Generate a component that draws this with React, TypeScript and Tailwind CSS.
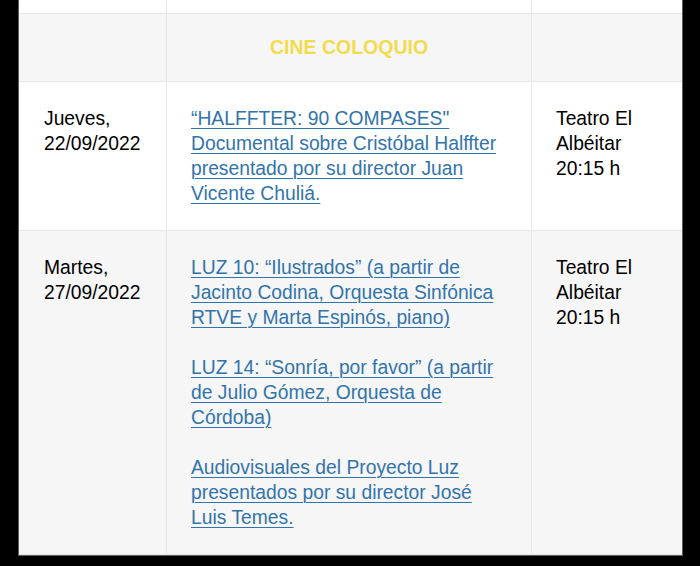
import React from 'react';

const linkCls = 'text-[#3274aa] underline decoration-1 underline-offset-[3px]';

const Cell: React.FC<{ last?: boolean; className?: string; children?: React.ReactNode }> = ({
  last,
  className = '',
  children,
}) => (
  <div className={`border-b border-[#e7e7e7] ${last ? '' : 'border-r'} ${className}`}>{children}</div>
);

export default function App() {
  return (
    <div className="w-[700px] h-[566px] bg-black overflow-hidden" style={{ fontFamily: '"Liberation Sans", Arial, sans-serif' }}>
      <div className="ml-[18px] w-[665px] border-l border-r border-b border-[#5e5e5e] bg-white text-[19.3px] leading-[25px] text-black">
        <div className="grid grid-cols-[148px_365px_150px]">
          {/* tail of the previous row */}
          <Cell className="h-[14px]" />
          <Cell className="h-[14px]" />
          <Cell last className="h-[14px]" />

          {/* section heading */}
          <Cell className="bg-[#f6f6f6]" />
          <Cell className="bg-[#f6f6f6] py-6 text-center text-[19.5px] leading-[19px] font-bold text-[#f1dc4e]">
            CINE COLOQUIO
          </Cell>
          <Cell last className="bg-[#f6f6f6]" />

          <Cell className="px-[25px] py-6">
            Jueves,
            <br />
            22/09/2022
          </Cell>
          <Cell className="px-6 py-6">
            <a href="#" className={linkCls}>
              “HALFFTER: 90 COMPASES" Documental sobre Cristóbal Halffter presentado por su director Juan Vicente Chuliá.
            </a>
          </Cell>
          <Cell last className="px-6 py-6">
            Teatro El
            <br />
            Albéitar
            <br />
            20:15 h
          </Cell>

          <Cell className="bg-[#f6f6f6] px-[25px] py-6">
            Martes,
            <br />
            27/09/2022
          </Cell>
          <Cell className="bg-[#f6f6f6] px-6 py-6 flex flex-col gap-[25px]">
            <p>
              <a href="#" className={linkCls}>
                LUZ 10: “Ilustrados” (a partir de Jacinto Codina, Orquesta Sinfónica RTVE y Marta Espinós, piano)
              </a>
            </p>
            <p>
              <a href="#" className={linkCls}>
                LUZ 14: “Sonría, por favor” (a partir de Julio Gómez, Orquesta de Córdoba)
              </a>
            </p>
            <p>
              <a href="#" className={linkCls}>
                Audiovisuales del Proyecto Luz presentados por su director José Luis Temes.
              </a>
            </p>
          </Cell>
          <Cell last className="bg-[#f6f6f6] px-6 py-6">
            Teatro El
            <br />
            Albéitar
            <br />
            20:15 h
          </Cell>
        </div>
      </div>
    </div>
  );
}
